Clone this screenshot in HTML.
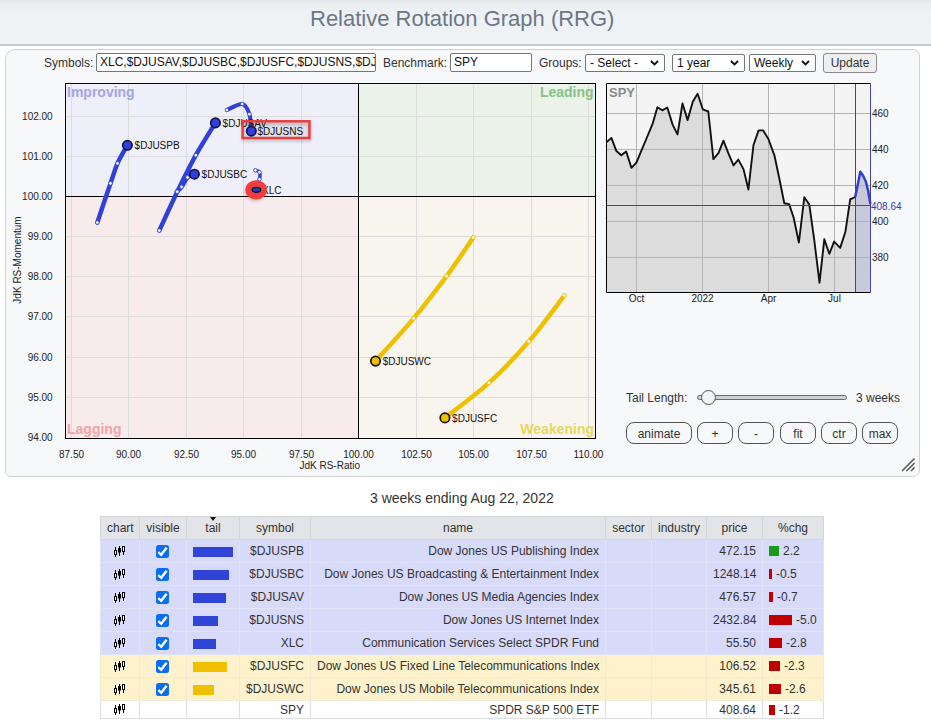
<!DOCTYPE html>
<html><head><meta charset="utf-8"><style>
*{box-sizing:border-box}
html,body{margin:0;padding:0}
body{width:931px;height:728px;overflow:hidden;background:#fff;position:relative;font-family:'Liberation Sans', sans-serif;color:#333}
#hdr{position:absolute;left:0;top:0;width:931px;height:46px;background:linear-gradient(#e1e4e7 0px,#ebeef1 4px,#eef1f4 12px,#f0f3f6 44px);border-bottom:2px solid #c4c9ce}
#title{position:absolute;left:310px;top:8px;font-size:22px;line-height:22px;color:#6b7786;white-space:nowrap}
#panel{position:absolute;left:5px;top:49px;width:915px;height:428px;background:#f7f8fa;border:1px solid #cfd1d4;border-radius:10px 7px 7px 6px}
.lbl{position:absolute;font-size:12px;line-height:14px;color:#333;white-space:nowrap}
.inp{position:absolute;height:19px;border:1px solid #767676;border-radius:2px;background:#fff;font-size:12px;line-height:17px;padding-left:3px;color:#111;white-space:nowrap;overflow:hidden}
.sel{position:absolute;height:18px;border:1px solid #767676;border-radius:2px;background:#fff;font-size:12px;line-height:16px;padding-left:4px;color:#111;white-space:nowrap;overflow:hidden}
.sel svg{position:absolute;right:5px;top:5px}
.btn{position:absolute;height:22px;border:1px solid #555;border-radius:8px;background:#f7f8fa;font-size:12px;line-height:22px;text-align:center;color:#333}
svg.full{position:absolute;left:0;top:0}
svg text{font-family:'Liberation Sans', sans-serif}
#cap{position:absolute;left:370px;top:490px;font-size:14px;line-height:16px;color:#333;white-space:nowrap}
#tbl{position:absolute;left:100px;top:516px;border-collapse:collapse;table-layout:fixed;width:724px;font-size:12px;color:#333}
#tbl td{border:1px solid #dcdde0;text-align:center;padding:0 6px;height:23px;white-space:nowrap;overflow:hidden}
#tbl td.r{text-align:right}
#tbl tr.hd td{background:#e2e4e7;height:23px;border-color:#d3d6d9}
#tbl tr.rb td{background:#d8dafa;border-color:#e0e2f6}
#tbl tr.ry td{background:#fdf2cc;border-color:#f3ead6}
#tbl tr.rw td{background:#fff;height:18px}
.bar{display:inline-block;height:10px;vertical-align:-1px;margin-right:4px}
.tri{position:absolute;left:50%;top:0;margin-left:-3px;border-left:3.5px solid transparent;border-right:3.5px solid transparent;border-top:4px solid #111}
</style></head><body>
<div id="hdr"><div id="title">Relative Rotation Graph (RRG)</div></div>
<div id="panel"></div>
<div class="lbl" style="left:44px;top:56px">Symbols:</div>
<div class="inp" style="left:96px;top:53px;width:280px">XLC,$DJUSAV,$DJUSBC,$DJUSFC,$DJUSNS,$DJUSPB,$DJUSWC</div>
<div class="lbl" style="left:383px;top:56px">Benchmark:</div>
<div class="inp" style="left:450px;top:53px;width:82px">SPY</div>
<div class="lbl" style="left:539px;top:56px">Groups:</div>
<div class="sel" style="left:585px;top:54px;width:80px">- Select -<svg width="9" height="6"><path d="M1,1 L4.5,4.5 L8,1" fill="none" stroke="#111" stroke-width="1.8"/></svg></div>
<div class="sel" style="left:672px;top:54px;width:73px">1 year<svg width="9" height="6"><path d="M1,1 L4.5,4.5 L8,1" fill="none" stroke="#111" stroke-width="1.8"/></svg></div>
<div class="sel" style="left:749px;top:54px;width:67px">Weekly<svg width="9" height="6"><path d="M1,1 L4.5,4.5 L8,1" fill="none" stroke="#111" stroke-width="1.8"/></svg></div>
<div class="btn" style="left:823px;top:53px;width:54px;height:20px;border-radius:3px;border-color:#8a8a8a;background:#efefef;line-height:18px">Update</div>
<svg class="full" width="931" height="728" viewBox="0 0 931 728"><rect x="65.5" y="83.5" width="293.0" height="113.0" fill="#eeeff9"/><rect x="358.5" y="83.5" width="237.0" height="113.0" fill="#ebf2ea"/><rect x="65.5" y="196.5" width="293.0" height="242.0" fill="#f8ebeb"/><rect x="358.5" y="196.5" width="237.0" height="242.0" fill="#f8f5ee"/><line x1="71.5" y1="83.5" x2="71.5" y2="438.5" stroke="#dcdcdc" stroke-width="1"/><line x1="128.5" y1="83.5" x2="128.5" y2="438.5" stroke="#dcdcdc" stroke-width="1"/><line x1="186.5" y1="83.5" x2="186.5" y2="438.5" stroke="#dcdcdc" stroke-width="1"/><line x1="243.5" y1="83.5" x2="243.5" y2="438.5" stroke="#dcdcdc" stroke-width="1"/><line x1="301.5" y1="83.5" x2="301.5" y2="438.5" stroke="#dcdcdc" stroke-width="1"/><line x1="416.5" y1="83.5" x2="416.5" y2="438.5" stroke="#dcdcdc" stroke-width="1"/><line x1="473.5" y1="83.5" x2="473.5" y2="438.5" stroke="#dcdcdc" stroke-width="1"/><line x1="531.5" y1="83.5" x2="531.5" y2="438.5" stroke="#dcdcdc" stroke-width="1"/><line x1="588.5" y1="83.5" x2="588.5" y2="438.5" stroke="#dcdcdc" stroke-width="1"/><line x1="65.5" y1="116.5" x2="595.5" y2="116.5" stroke="#dcdcdc" stroke-width="1"/><line x1="65.5" y1="156.5" x2="595.5" y2="156.5" stroke="#dcdcdc" stroke-width="1"/><line x1="65.5" y1="236.5" x2="595.5" y2="236.5" stroke="#dcdcdc" stroke-width="1"/><line x1="65.5" y1="276.5" x2="595.5" y2="276.5" stroke="#dcdcdc" stroke-width="1"/><line x1="65.5" y1="316.5" x2="595.5" y2="316.5" stroke="#dcdcdc" stroke-width="1"/><line x1="65.5" y1="357.5" x2="595.5" y2="357.5" stroke="#dcdcdc" stroke-width="1"/><line x1="65.5" y1="397.5" x2="595.5" y2="397.5" stroke="#dcdcdc" stroke-width="1"/><line x1="358.5" y1="83.5" x2="358.5" y2="438.5" stroke="#000" stroke-width="1"/><line x1="65.5" y1="196.5" x2="595.5" y2="196.5" stroke="#000" stroke-width="1"/><rect x="65.5" y="83.5" width="530.0" height="355.0" fill="none" stroke="#000" stroke-width="1"/><text x="67" y="97" font-size="14" font-weight="bold" fill="#a0a6e2">Improving</text><text x="593.6" y="97" font-size="14" font-weight="bold" fill="#86c286" text-anchor="end">Leading</text><text x="67" y="434" font-size="14" font-weight="bold" fill="#f0a4a8">Lagging</text><text x="594" y="434" font-size="14" font-weight="bold" fill="#e8d85a" text-anchor="end">Weakening</text><text x="52.7" y="119.8" font-size="10" fill="#222" text-anchor="end">102.00</text><text x="52.7" y="159.8" font-size="10" fill="#222" text-anchor="end">101.00</text><text x="52.7" y="199.8" font-size="10" fill="#222" text-anchor="end">100.00</text><text x="52.7" y="239.8" font-size="10" fill="#222" text-anchor="end">99.00</text><text x="52.7" y="279.8" font-size="10" fill="#222" text-anchor="end">98.00</text><text x="52.7" y="319.8" font-size="10" fill="#222" text-anchor="end">97.00</text><text x="52.7" y="360.8" font-size="10" fill="#222" text-anchor="end">96.00</text><text x="52.7" y="400.8" font-size="10" fill="#222" text-anchor="end">95.00</text><text x="52.7" y="440.8" font-size="10" fill="#222" text-anchor="end">94.00</text><text x="71.5" y="457.5" font-size="10" fill="#222" text-anchor="middle">87.50</text><text x="128.5" y="457.5" font-size="10" fill="#222" text-anchor="middle">90.00</text><text x="186.5" y="457.5" font-size="10" fill="#222" text-anchor="middle">92.50</text><text x="243.5" y="457.5" font-size="10" fill="#222" text-anchor="middle">95.00</text><text x="301.5" y="457.5" font-size="10" fill="#222" text-anchor="middle">97.50</text><text x="358.5" y="457.5" font-size="10" fill="#222" text-anchor="middle">100.00</text><text x="416.5" y="457.5" font-size="10" fill="#222" text-anchor="middle">102.50</text><text x="473.5" y="457.5" font-size="10" fill="#222" text-anchor="middle">105.00</text><text x="531.5" y="457.5" font-size="10" fill="#222" text-anchor="middle">107.50</text><text x="588.5" y="457.5" font-size="10" fill="#222" text-anchor="middle">110.00</text><text x="360" y="469" font-size="10" fill="#222" text-anchor="end">JdK RS-Ratio</text><text transform="translate(21,260) rotate(-90)" x="0" y="0" font-size="10" fill="#222" text-anchor="middle">JdK RS-Momentum</text><path d="M97.3,222.5 C99.5,216.0 107.1,193.2 110.5,183.4 C113.9,173.6 114.7,169.8 117.5,163.4 C120.3,157.1 125.8,148.3 127.4,145.3" fill="none" stroke="#3040d8" stroke-width="4.5" stroke-linecap="round" stroke-linejoin="round"/><path d="M176.9,191.6 C177.7,190.8 179.8,189.3 181.6,186.9 C183.4,184.5 185.4,179.5 187.5,177.4 C189.6,175.3 193.2,174.7 194.4,174.2" fill="none" stroke="#3040d8" stroke-width="4.5" stroke-linecap="round" stroke-linejoin="round"/><path d="M159.3,230.5 C162.3,224.1 171.2,204.4 177.3,191.8 C183.4,179.2 189.5,166.7 195.8,155.2 C202.2,143.7 212.1,128.3 215.4,122.9" fill="none" stroke="#3040d8" stroke-width="4.5" stroke-linecap="round" stroke-linejoin="round"/><path d="M226.9,110 C229.5,109.0 238.6,103.3 242.3,104 C246.1,104.7 247.9,109.7 249.4,114.2 C250.9,118.7 251.0,128.2 251.3,131" fill="none" stroke="#3040d8" stroke-width="4" stroke-linecap="round" stroke-linejoin="round"/><path d="M255.4,170.3 C256.1,170.6 258.8,170.7 259.5,172.2 C260.2,173.7 260.1,176.4 259.5,179.3 C258.9,182.2 256.8,187.9 256.2,189.6" fill="none" stroke="#3040d8" stroke-width="3.5" stroke-linecap="round" stroke-linejoin="round"/><path d="M473.4,237.4 C468.9,243.9 456.6,262.6 446.6,276.1 C436.6,289.6 425.5,304.2 413.6,318.4 C401.8,332.6 381.9,354.0 375.5,361.1" fill="none" stroke="#efc000" stroke-width="4.5" stroke-linecap="round" stroke-linejoin="round"/><path d="M564.4,295.4 C558.5,303.1 541.4,326.9 528.8,341.5 C516.2,356.1 502.9,370.1 488.9,382.8 C474.9,395.5 452.2,412.0 444.9,417.9" fill="none" stroke="#efc000" stroke-width="4.5" stroke-linecap="round" stroke-linejoin="round"/><circle cx="97.3" cy="222.5" r="1.8" fill="#fff" stroke="#3040d8" stroke-width="0.8"/><circle cx="110.5" cy="183.4" r="1.8" fill="#fff" stroke="#3040d8" stroke-width="0.8"/><circle cx="117.5" cy="163.4" r="1.8" fill="#fff" stroke="#3040d8" stroke-width="0.8"/><circle cx="176.9" cy="191.6" r="1.8" fill="#fff" stroke="#3040d8" stroke-width="0.8"/><circle cx="181.6" cy="186.9" r="1.8" fill="#fff" stroke="#3040d8" stroke-width="0.8"/><circle cx="187.5" cy="177.4" r="1.8" fill="#fff" stroke="#3040d8" stroke-width="0.8"/><circle cx="159.3" cy="230.5" r="1.8" fill="#fff" stroke="#3040d8" stroke-width="0.8"/><circle cx="177.3" cy="191.8" r="1.8" fill="#fff" stroke="#3040d8" stroke-width="0.8"/><circle cx="195.8" cy="155.2" r="1.8" fill="#fff" stroke="#3040d8" stroke-width="0.8"/><circle cx="226.9" cy="110" r="1.8" fill="#fff" stroke="#3040d8" stroke-width="0.8"/><circle cx="242.3" cy="104" r="1.8" fill="#fff" stroke="#3040d8" stroke-width="0.8"/><circle cx="249.4" cy="114.2" r="1.8" fill="#fff" stroke="#3040d8" stroke-width="0.8"/><circle cx="255.4" cy="170.3" r="1.8" fill="#fff" stroke="#3040d8" stroke-width="0.8"/><circle cx="259.5" cy="172.2" r="1.8" fill="#fff" stroke="#3040d8" stroke-width="0.8"/><circle cx="259.5" cy="179.3" r="1.8" fill="#fff" stroke="#3040d8" stroke-width="0.8"/><circle cx="473.4" cy="237.4" r="1.8" fill="#fff" stroke="#efc000" stroke-width="0.8"/><circle cx="446.6" cy="276.1" r="1.8" fill="#fff" stroke="#efc000" stroke-width="0.8"/><circle cx="413.6" cy="318.4" r="1.8" fill="#fff" stroke="#efc000" stroke-width="0.8"/><circle cx="564.4" cy="295.4" r="1.8" fill="#fff" stroke="#efc000" stroke-width="0.8"/><circle cx="528.8" cy="341.5" r="1.8" fill="#fff" stroke="#efc000" stroke-width="0.8"/><circle cx="488.9" cy="382.8" r="1.8" fill="#fff" stroke="#efc000" stroke-width="0.8"/><circle cx="127.4" cy="145.3" r="4.7" fill="#3040d8" stroke="#0c1250" stroke-width="1.7"/><text x="134.6" y="148.9" font-size="10" fill="#111">$DJUSPB</text><circle cx="194.4" cy="174.2" r="4.7" fill="#3040d8" stroke="#0c1250" stroke-width="1.7"/><text x="201.6" y="177.79999999999998" font-size="10" fill="#111">$DJUSBC</text><circle cx="215.4" cy="122.9" r="4.7" fill="#3040d8" stroke="#0c1250" stroke-width="1.7"/><text x="222.6" y="126.5" font-size="10" fill="#111">$DJUSAV</text><circle cx="375.5" cy="361.1" r="4.7" fill="#efc000" stroke="#1a1000" stroke-width="1.7"/><text x="382.7" y="364.70000000000005" font-size="10" fill="#111">$DJUSWC</text><circle cx="444.9" cy="417.9" r="4.7" fill="#efc000" stroke="#1a1000" stroke-width="1.7"/><text x="452.09999999999997" y="421.5" font-size="10" fill="#111">$DJUSFC</text><defs><filter id="bl1" x="-50%" y="-50%" width="200%" height="200%"><feGaussianBlur stdDeviation="0.45"/></filter><filter id="bl2" x="-50%" y="-50%" width="200%" height="200%"><feGaussianBlur stdDeviation="1.5"/></filter></defs><text x="262" y="194" font-size="10" fill="#111">XLC</text><ellipse cx="255.5" cy="191.5" rx="11" ry="10" fill="#000" opacity="0.18" filter="url(#bl2)"/><ellipse cx="256.2" cy="189.9" rx="10.8" ry="9.6" fill="#f23c3c" filter="url(#bl1)"/><ellipse cx="256.4" cy="189.8" rx="4.3" ry="2.4" fill="#2440b8" stroke="#0c1440" stroke-width="1.4"/><rect x="243" y="123.5" width="67" height="16.7" fill="none" stroke="#000" stroke-width="2.5" opacity="0.22" filter="url(#bl2)"/><rect x="242.6" y="121.3" width="66.8" height="16.7" fill="none" stroke="#ec3c3c" stroke-width="2.5"/><rect x="243.8" y="122.5" width="64.4" height="14.3" fill="#000" opacity="0.06"/><circle cx="251.3" cy="131.2" r="4.7" fill="#3040d8" stroke="#0c1250" stroke-width="1.7"/><text x="257.5" y="134.6" font-size="10" fill="#111">$DJUSNS</text><rect x="606.5" y="83.5" width="264.0" height="209.0" fill="#f4f4f4"/><path d="M606.7,142.1 L611.4,137.9 L616.4,151.1 L621.3,155.2 L626.2,151.5 L631.4,167.8 L636.4,162.6 L641.5,150.4 L646.7,138 L652.8,123.3 L657.4,107.2 L662.3,110.3 L667.3,107.5 L672.6,124.6 L677.5,134.4 L682.5,103.5 L687.6,120.1 L692.8,101.7 L697.6,93.8 L702.8,109.3 L708.3,111.5 L713.4,159.1 L718.6,152.8 L723.4,140.7 L728.5,153.6 L733.5,165.3 L738.3,159.6 L743.5,169.1 L748.4,189.5 L753.5,145 L758.6,130.4 L763.2,130.4 L768.4,139 L774.4,155.3 L779.2,178 L784.3,203.2 L789.1,204.1 L793.6,217.5 L798.9,242.5 L804.3,197.3 L809.3,204.6 L814.1,238.9 L819.5,282.7 L824.3,239.3 L829.3,253.8 L834.1,241.6 L840.2,247.9 L845.4,231.8 L850.2,199.3 L855.2,197 L855.2,292.5 L606.5,292.5 Z" fill="#dcdcdc"/><path d="M855.2,197 L857.5,186 L860.3,171.8 L863,175.5 L865.8,181.5 L868,190 L870.4,204.1 L870.4,292.5 L855.2,292.5 Z" fill="#c8cadc"/><line x1="636.5" y1="83.5" x2="636.5" y2="292.5" stroke="#b4b4b4" stroke-width="1"/><line x1="702.5" y1="83.5" x2="702.5" y2="292.5" stroke="#b4b4b4" stroke-width="1"/><line x1="768.5" y1="83.5" x2="768.5" y2="292.5" stroke="#b4b4b4" stroke-width="1"/><line x1="834.5" y1="83.5" x2="834.5" y2="292.5" stroke="#b4b4b4" stroke-width="1"/><line x1="606.5" y1="113.5" x2="870.5" y2="113.5" stroke="#b4b4b4" stroke-width="1"/><line x1="606.5" y1="149.5" x2="870.5" y2="149.5" stroke="#b4b4b4" stroke-width="1"/><line x1="606.5" y1="185.5" x2="870.5" y2="185.5" stroke="#b4b4b4" stroke-width="1"/><line x1="606.5" y1="221.5" x2="870.5" y2="221.5" stroke="#b4b4b4" stroke-width="1"/><line x1="606.5" y1="257.5" x2="870.5" y2="257.5" stroke="#b4b4b4" stroke-width="1"/><text x="609" y="96.5" font-size="13" font-weight="bold" fill="#888">SPY</text><path d="M606.7,142.1 L611.4,137.9 L616.4,151.1 L621.3,155.2 L626.2,151.5 L631.4,167.8 L636.4,162.6 L641.5,150.4 L646.7,138 L652.8,123.3 L657.4,107.2 L662.3,110.3 L667.3,107.5 L672.6,124.6 L677.5,134.4 L682.5,103.5 L687.6,120.1 L692.8,101.7 L697.6,93.8 L702.8,109.3 L708.3,111.5 L713.4,159.1 L718.6,152.8 L723.4,140.7 L728.5,153.6 L733.5,165.3 L738.3,159.6 L743.5,169.1 L748.4,189.5 L753.5,145 L758.6,130.4 L763.2,130.4 L768.4,139 L774.4,155.3 L779.2,178 L784.3,203.2 L789.1,204.1 L793.6,217.5 L798.9,242.5 L804.3,197.3 L809.3,204.6 L814.1,238.9 L819.5,282.7 L824.3,239.3 L829.3,253.8 L834.1,241.6 L840.2,247.9 L845.4,231.8 L850.2,199.3 L855.2,197" fill="none" stroke="#111" stroke-width="1.9" stroke-linejoin="round"/><path d="M855.2,197 L857.5,186 L860.3,171.8 L863,175.5 L865.8,181.5 L868,190 L870.4,204.1" fill="none" stroke="#3040d0" stroke-width="2.5" stroke-linejoin="round"/><line x1="606.5" y1="205.5" x2="870.5" y2="205.5" stroke="#4040a8" stroke-width="1"/><line x1="855.5" y1="83.5" x2="855.5" y2="292.5" stroke="#4040a8" stroke-width="1"/><path d="M870.5,83.5 L606.5,83.5 L606.5,292.5 L870.5,292.5" fill="none" stroke="#000" stroke-width="1"/><line x1="870.5" y1="83.5" x2="870.5" y2="292.5" stroke="#4040a8" stroke-width="1"/><text x="872" y="117.0" font-size="10" fill="#222">460</text><text x="872" y="153.0" font-size="10" fill="#222">440</text><text x="872" y="189.0" font-size="10" fill="#222">420</text><text x="872" y="225.0" font-size="10" fill="#222">400</text><text x="872" y="261.0" font-size="10" fill="#222">380</text><text x="871" y="209.5" font-size="10" fill="#3040c0">408.64</text><text x="636.5" y="302" font-size="10" fill="#222" text-anchor="middle">Oct</text><text x="702.5" y="302" font-size="10" fill="#222" text-anchor="middle">2022</text><text x="768.5" y="302" font-size="10" fill="#222" text-anchor="middle">Apr</text><text x="834.5" y="302" font-size="10" fill="#222" text-anchor="middle">Jul</text></svg>
<div class="lbl" style="left:626px;top:391px">Tail Length:</div>
<div style="position:absolute;left:697px;top:395px;width:150px;height:5px;border:1px solid #6a6a6a;border-radius:3px;background:#d0d0d0"></div>
<div style="position:absolute;left:701px;top:390px;width:15px;height:15px;border:1px solid #555;border-radius:50%;background:#f2f2f2"></div>
<div class="lbl" style="left:856px;top:391px">3 weeks</div>
<div class="btn" style="left:626px;top:422px;width:66px">animate</div>
<div class="btn" style="left:697px;top:422px;width:36px">+</div>
<div class="btn" style="left:738px;top:422px;width:36px">-</div>
<div class="btn" style="left:780px;top:422px;width:36px">fit</div>
<div class="btn" style="left:821px;top:422px;width:36px">ctr</div>
<div class="btn" style="left:862px;top:422px;width:36px">max</div>
<svg class="full" width="931" height="728"><path d="M902,471 L914.5,458.5 M906.5,471 L914.5,463 M911,471 L914.5,467.5" stroke="#555" stroke-width="1.5"/></svg>
<div id="cap">3 weeks ending Aug 22, 2022</div>
<table id="tbl"><colgroup><col style="width:39px"><col style="width:47px"><col style="width:53px"><col style="width:71px"><col style="width:295px"><col style="width:46px"><col style="width:55px"><col style="width:56px"><col style="width:61px"></colgroup><tr class="hd"><td>chart</td><td>visible</td><td style="position:relative">tail<span class="tri"></span></td><td>symbol</td><td>name</td><td>sector</td><td>industry</td><td>price</td><td>%chg</td></tr><tr class="rb"><td><svg width="12" height="11" viewBox="0 0 12 11" style="display:block;margin:0 auto;position:relative;left:0px;top:0px"><path d="M1.5,1 V11 M5.5,0 V10 M9.5,5 V9" stroke="#000" stroke-width="1"/><rect x="0.5" y="4.5" width="2" height="4" fill="#fff" stroke="#000" stroke-width="1"/><rect x="4" y="2" width="3" height="4.5" fill="#000"/><rect x="8.5" y="0.5" width="2" height="5" fill="#fff" stroke="#000" stroke-width="1"/></svg></td><td><svg width="13" height="13" viewBox="0 0 13 13" style="display:block;margin:0 auto;position:relative;left:-1px"><rect x="0" y="0" width="13" height="13" rx="2.5" fill="#0b6ef0"/><path d="M2.3,7.2 L5.2,9.8 L10.6,2.8" fill="none" stroke="#fff" stroke-width="2.4"/></svg></td><td style="text-align:left;padding-left:6px"><div style="width:40px;height:10px;background:#3044d8;margin-top:1px"></div></td><td class="r">$DJUSPB</td><td class="r">Dow Jones US Publishing Index</td><td></td><td></td><td class="r">472.15</td><td style="text-align:left;padding-left:6px"><span class="bar" style="width:10px;background:#1a9a1a"></span>2.2</td></tr><tr class="rb"><td><svg width="12" height="11" viewBox="0 0 12 11" style="display:block;margin:0 auto;position:relative;left:0px;top:0px"><path d="M1.5,1 V11 M5.5,0 V10 M9.5,5 V9" stroke="#000" stroke-width="1"/><rect x="0.5" y="4.5" width="2" height="4" fill="#fff" stroke="#000" stroke-width="1"/><rect x="4" y="2" width="3" height="4.5" fill="#000"/><rect x="8.5" y="0.5" width="2" height="5" fill="#fff" stroke="#000" stroke-width="1"/></svg></td><td><svg width="13" height="13" viewBox="0 0 13 13" style="display:block;margin:0 auto;position:relative;left:-1px"><rect x="0" y="0" width="13" height="13" rx="2.5" fill="#0b6ef0"/><path d="M2.3,7.2 L5.2,9.8 L10.6,2.8" fill="none" stroke="#fff" stroke-width="2.4"/></svg></td><td style="text-align:left;padding-left:6px"><div style="width:36px;height:10px;background:#3044d8;margin-top:1px"></div></td><td class="r">$DJUSBC</td><td class="r">Dow Jones US Broadcasting &amp; Entertainment Index</td><td></td><td></td><td class="r">1248.14</td><td style="text-align:left;padding-left:6px"><span class="bar" style="width:3px;background:#c00000"></span>-0.5</td></tr><tr class="rb"><td><svg width="12" height="11" viewBox="0 0 12 11" style="display:block;margin:0 auto;position:relative;left:0px;top:0px"><path d="M1.5,1 V11 M5.5,0 V10 M9.5,5 V9" stroke="#000" stroke-width="1"/><rect x="0.5" y="4.5" width="2" height="4" fill="#fff" stroke="#000" stroke-width="1"/><rect x="4" y="2" width="3" height="4.5" fill="#000"/><rect x="8.5" y="0.5" width="2" height="5" fill="#fff" stroke="#000" stroke-width="1"/></svg></td><td><svg width="13" height="13" viewBox="0 0 13 13" style="display:block;margin:0 auto;position:relative;left:-1px"><rect x="0" y="0" width="13" height="13" rx="2.5" fill="#0b6ef0"/><path d="M2.3,7.2 L5.2,9.8 L10.6,2.8" fill="none" stroke="#fff" stroke-width="2.4"/></svg></td><td style="text-align:left;padding-left:6px"><div style="width:33px;height:10px;background:#3044d8;margin-top:1px"></div></td><td class="r">$DJUSAV</td><td class="r">Dow Jones US Media Agencies Index</td><td></td><td></td><td class="r">476.57</td><td style="text-align:left;padding-left:6px"><span class="bar" style="width:4px;background:#c00000"></span>-0.7</td></tr><tr class="rb"><td><svg width="12" height="11" viewBox="0 0 12 11" style="display:block;margin:0 auto;position:relative;left:0px;top:0px"><path d="M1.5,1 V11 M5.5,0 V10 M9.5,5 V9" stroke="#000" stroke-width="1"/><rect x="0.5" y="4.5" width="2" height="4" fill="#fff" stroke="#000" stroke-width="1"/><rect x="4" y="2" width="3" height="4.5" fill="#000"/><rect x="8.5" y="0.5" width="2" height="5" fill="#fff" stroke="#000" stroke-width="1"/></svg></td><td><svg width="13" height="13" viewBox="0 0 13 13" style="display:block;margin:0 auto;position:relative;left:-1px"><rect x="0" y="0" width="13" height="13" rx="2.5" fill="#0b6ef0"/><path d="M2.3,7.2 L5.2,9.8 L10.6,2.8" fill="none" stroke="#fff" stroke-width="2.4"/></svg></td><td style="text-align:left;padding-left:6px"><div style="width:25px;height:10px;background:#3044d8;margin-top:1px"></div></td><td class="r">$DJUSNS</td><td class="r">Dow Jones US Internet Index</td><td></td><td></td><td class="r">2432.84</td><td style="text-align:left;padding-left:6px"><span class="bar" style="width:23px;background:#c00000"></span>-5.0</td></tr><tr class="rb"><td><svg width="12" height="11" viewBox="0 0 12 11" style="display:block;margin:0 auto;position:relative;left:0px;top:0px"><path d="M1.5,1 V11 M5.5,0 V10 M9.5,5 V9" stroke="#000" stroke-width="1"/><rect x="0.5" y="4.5" width="2" height="4" fill="#fff" stroke="#000" stroke-width="1"/><rect x="4" y="2" width="3" height="4.5" fill="#000"/><rect x="8.5" y="0.5" width="2" height="5" fill="#fff" stroke="#000" stroke-width="1"/></svg></td><td><svg width="13" height="13" viewBox="0 0 13 13" style="display:block;margin:0 auto;position:relative;left:-1px"><rect x="0" y="0" width="13" height="13" rx="2.5" fill="#0b6ef0"/><path d="M2.3,7.2 L5.2,9.8 L10.6,2.8" fill="none" stroke="#fff" stroke-width="2.4"/></svg></td><td style="text-align:left;padding-left:6px"><div style="width:23px;height:10px;background:#3044d8;margin-top:1px"></div></td><td class="r">XLC</td><td class="r">Communication Services Select SPDR Fund</td><td></td><td></td><td class="r">55.50</td><td style="text-align:left;padding-left:6px"><span class="bar" style="width:13px;background:#c00000"></span>-2.8</td></tr><tr class="ry"><td><svg width="12" height="11" viewBox="0 0 12 11" style="display:block;margin:0 auto;position:relative;left:0px;top:0px"><path d="M1.5,1 V11 M5.5,0 V10 M9.5,5 V9" stroke="#000" stroke-width="1"/><rect x="0.5" y="4.5" width="2" height="4" fill="#fff" stroke="#000" stroke-width="1"/><rect x="4" y="2" width="3" height="4.5" fill="#000"/><rect x="8.5" y="0.5" width="2" height="5" fill="#fff" stroke="#000" stroke-width="1"/></svg></td><td><svg width="13" height="13" viewBox="0 0 13 13" style="display:block;margin:0 auto;position:relative;left:-1px"><rect x="0" y="0" width="13" height="13" rx="2.5" fill="#0b6ef0"/><path d="M2.3,7.2 L5.2,9.8 L10.6,2.8" fill="none" stroke="#fff" stroke-width="2.4"/></svg></td><td style="text-align:left;padding-left:6px"><div style="width:34px;height:10px;background:#f0c000;margin-top:1px"></div></td><td class="r">$DJUSFC</td><td class="r">Dow Jones US Fixed Line Telecommunications Index</td><td></td><td></td><td class="r">106.52</td><td style="text-align:left;padding-left:6px"><span class="bar" style="width:11px;background:#c00000"></span>-2.3</td></tr><tr class="ry"><td><svg width="12" height="11" viewBox="0 0 12 11" style="display:block;margin:0 auto;position:relative;left:0px;top:0px"><path d="M1.5,1 V11 M5.5,0 V10 M9.5,5 V9" stroke="#000" stroke-width="1"/><rect x="0.5" y="4.5" width="2" height="4" fill="#fff" stroke="#000" stroke-width="1"/><rect x="4" y="2" width="3" height="4.5" fill="#000"/><rect x="8.5" y="0.5" width="2" height="5" fill="#fff" stroke="#000" stroke-width="1"/></svg></td><td><svg width="13" height="13" viewBox="0 0 13 13" style="display:block;margin:0 auto;position:relative;left:-1px"><rect x="0" y="0" width="13" height="13" rx="2.5" fill="#0b6ef0"/><path d="M2.3,7.2 L5.2,9.8 L10.6,2.8" fill="none" stroke="#fff" stroke-width="2.4"/></svg></td><td style="text-align:left;padding-left:6px"><div style="width:21px;height:10px;background:#f0c000;margin-top:1px"></div></td><td class="r">$DJUSWC</td><td class="r">Dow Jones US Mobile Telecommunications Index</td><td></td><td></td><td class="r">345.61</td><td style="text-align:left;padding-left:6px"><span class="bar" style="width:12px;background:#c00000"></span>-2.6</td></tr><tr class="rw"><td><svg width="12" height="11" viewBox="0 0 12 11" style="display:block;margin:0 auto;position:relative;left:0px;top:0px"><path d="M1.5,1 V11 M5.5,0 V10 M9.5,5 V9" stroke="#000" stroke-width="1"/><rect x="0.5" y="4.5" width="2" height="4" fill="#fff" stroke="#000" stroke-width="1"/><rect x="4" y="2" width="3" height="4.5" fill="#000"/><rect x="8.5" y="0.5" width="2" height="5" fill="#fff" stroke="#000" stroke-width="1"/></svg></td><td></td><td style="text-align:left;padding-left:6px"></td><td class="r">SPY</td><td class="r">SPDR S&amp;P 500 ETF</td><td></td><td></td><td class="r">408.64</td><td style="text-align:left;padding-left:6px"><span class="bar" style="width:6px;background:#c00000"></span>-1.2</td></tr></table>
</body></html>
